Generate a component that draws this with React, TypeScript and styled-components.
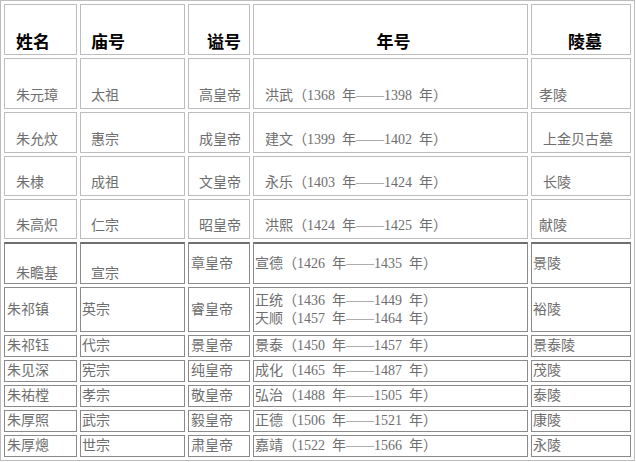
import React from "react";
import styled, { createGlobalStyle, css } from "styled-components";

const GlobalStyle = createGlobalStyle`
  html, body { margin: 0; padding: 0; background: #ffffff; }
`;

const Table = styled.table`
  border-collapse: separate;
  border-spacing: 3px;
  border: 1px solid #bcbcbc;
  table-layout: fixed;
  width: 635px;
  font-family: "Liberation Serif", "Noto Sans CJK SC", serif;
  font-size: 14px;
  word-spacing: 3.5px;
  color: #6e6e6e;
`;

const Col = styled.col<{ $w: number }>`
  width: ${(p) => p.$w}px;
`;

const Row = styled.tr<{ $h: number }>`
  height: ${(p) => p.$h}px;
`;

type Tone = "light" | "dark";

const Cell = styled.td<{
  $align?: "left" | "right" | "center";
  $valign?: "bottom" | "middle";
  $pl?: number;
  $pr?: number;
  $pb?: number;
  $tone?: Tone;
  $thickTop?: boolean;
  $lh?: number;
}>`
  box-sizing: border-box;
  padding: 0 ${(p) => p.$pr ?? 0}px ${(p) => p.$pb ?? 0}px ${(p) => p.$pl ?? 0}px;
  text-align: ${(p) => p.$align ?? "left"};
  vertical-align: ${(p) => p.$valign ?? "middle"};
  line-height: ${(p) => p.$lh ?? 16}px;
  white-space: nowrap;
  overflow: hidden;
  border: 1px solid ${(p) => (p.$tone === "dark" ? "#8a8a8a" : "#bdbdbd")};
  ${(p) =>
    p.$thickTop &&
    css`
      border-top: 2px solid #6f6f6f;
    `}
`;

const HeadCell = styled(Cell)`
  font-family: "Noto Sans CJK SC", sans-serif;
  font-weight: 700;
  font-size: 17px;
  color: #000000;
  line-height: 20px;
`;

const topRows = [
  { name: "朱元璋", temple: "太祖", post: "高皇帝", era: "洪武（1368 年——1398 年）", tomb: "孝陵", tp: 7 },
  { name: "朱允炆", temple: "惠宗", post: "成皇帝", era: "建文（1399 年——1402 年）", tomb: "上金贝古墓", tp: 11 },
  { name: "朱棣", temple: "成祖", post: "文皇帝", era: "永乐（1403 年——1424 年）", tomb: "长陵", tp: 11 },
  { name: "朱高炽", temple: "仁宗", post: "昭皇帝", era: "洪熙（1424 年——1425 年）", tomb: "献陵", tp: 7 },
];
const topHeights = [51, 41, 40, 40];

const lowRows = [
  { name: "朱祁钰", temple: "代宗", post: "景皇帝", era: "景泰（1450 年——1457 年）", tomb: "景泰陵" },
  { name: "朱见深", temple: "宪宗", post: "纯皇帝", era: "成化（1465 年——1487 年）", tomb: "茂陵" },
  { name: "朱祐樘", temple: "孝宗", post: "敬皇帝", era: "弘治（1488 年——1505 年）", tomb: "泰陵" },
  { name: "朱厚照", temple: "武宗", post: "毅皇帝", era: "正德（1506 年——1521 年）", tomb: "康陵" },
  { name: "朱厚熜", temple: "世宗", post: "肃皇帝", era: "嘉靖（1522 年——1566 年）", tomb: "永陵" },
];

export default function App() {
  return (
    <>
      <GlobalStyle />
      <Table>
        <colgroup>
          <Col $w={73} />
          <Col $w={105} />
          <Col $w={62} />
          <Col $w={275} />
          <Col $w={100} />
        </colgroup>
        <tbody>
          <Row $h={51}>
            <HeadCell $valign="bottom" $pl={11} $pb={3}>姓名</HeadCell>
            <HeadCell $valign="bottom" $pl={10} $pb={3}>庙号</HeadCell>
            <HeadCell $valign="bottom" $align="right" $pr={8} $pb={3}>谥号</HeadCell>
            <HeadCell $valign="bottom" $align="center" $pl={6} $pb={3}>年号</HeadCell>
            <HeadCell $valign="bottom" $pl={36} $pb={3}>陵墓</HeadCell>
          </Row>
          {topRows.map((r, i) => (
            <Row key={r.name} $h={topHeights[i]}>
              <Cell $valign="bottom" $pl={11} $pb={4}>{r.name}</Cell>
              <Cell $valign="bottom" $pl={10} $pb={4}>{r.temple}</Cell>
              <Cell $valign="bottom" $align="right" $pr={8} $pb={4}>{r.post}</Cell>
              <Cell $valign="bottom" $pl={11} $pb={4}>{r.era}</Cell>
              <Cell $valign="bottom" $pl={r.tp} $pb={4}>{r.tomb}</Cell>
            </Row>
          ))}
          <Row $h={42}>
            <Cell $tone="dark" $thickTop $valign="bottom" $pl={11} $pb={1}>朱瞻基</Cell>
            <Cell $tone="dark" $thickTop $valign="bottom" $pl={10} $pb={1}>宣宗</Cell>
            <Cell $tone="dark" $thickTop $pl={2}>章皇帝</Cell>
            <Cell $tone="dark" $thickTop $pl={1}>宣德（1426 年——1435 年）</Cell>
            <Cell $tone="dark" $thickTop $pl={1}>景陵</Cell>
          </Row>
          <Row $h={45}>
            <Cell $tone="dark" $pl={2}>朱祁镇</Cell>
            <Cell $tone="dark" $pl={1}>英宗</Cell>
            <Cell $tone="dark" $pl={2}>睿皇帝</Cell>
            <Cell $tone="dark" $pl={1} $lh={18}>
              正统（1436 年——1449 年）
              <br />
              天顺（1457 年——1464 年）
            </Cell>
            <Cell $tone="dark" $pl={1}>裕陵</Cell>
          </Row>
          {lowRows.map((r) => (
            <Row key={r.name} $h={22}>
              <Cell $tone="dark" $pl={2}>{r.name}</Cell>
              <Cell $tone="dark" $pl={1}>{r.temple}</Cell>
              <Cell $tone="dark" $pl={2}>{r.post}</Cell>
              <Cell $tone="dark" $pl={1}>{r.era}</Cell>
              <Cell $tone="dark" $pl={1}>{r.tomb}</Cell>
            </Row>
          ))}
        </tbody>
      </Table>
    </>
  );
}
